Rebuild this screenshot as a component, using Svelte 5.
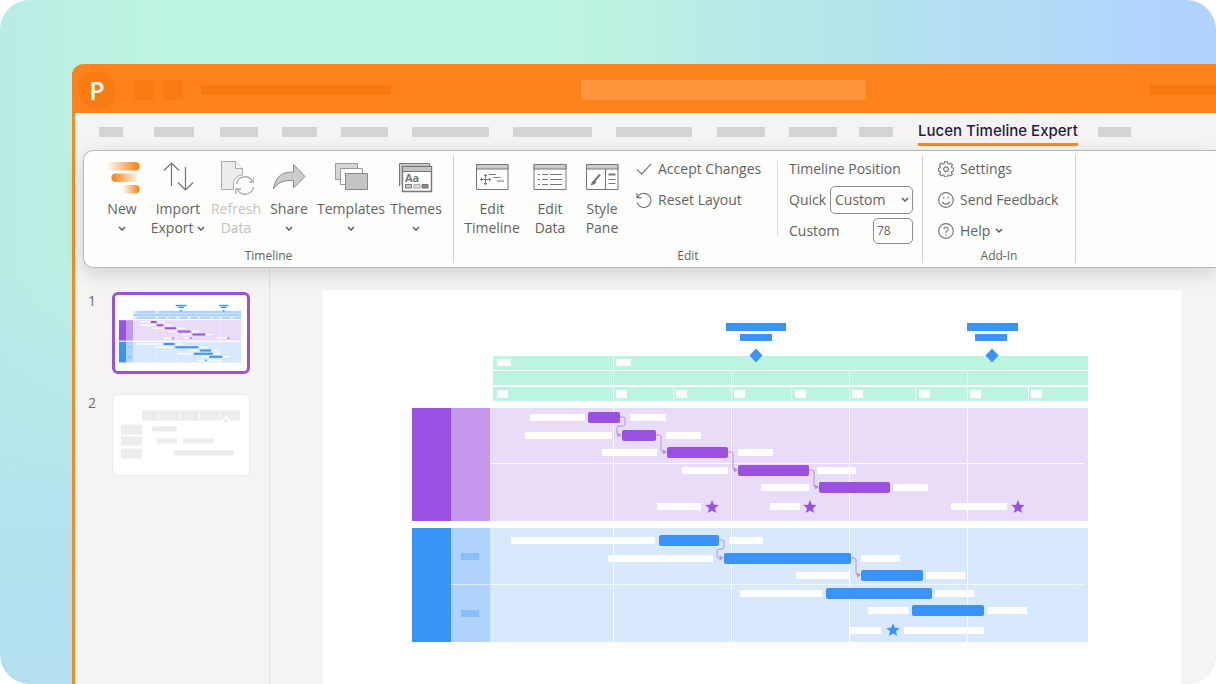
<script lang="ts">
	interface Task {
		y: number;
		before: number[];
		bar: number[];
		after: number[];
	}

	// placeholder tabs: bar width and the room each one takes
	const tabs = [
		{ bar: 24, slot: 55 },
		{ bar: 40, slot: 66 },
		{ bar: 38, slot: 62 },
		{ bar: 35, slot: 59 },
		{ bar: 47, slot: 71 },
		{ bar: 77, slot: 101 },
		{ bar: 79, slot: 103 },
		{ bar: 76, slot: 101 },
		{ bar: 48, slot: 72 },
		{ bar: 48, slot: 70 },
		{ bar: 34, slot: 59 }
	];

	const purpleTasks: Task[] = [
		{ y: 127, before: [207, 55], bar: [265, 32], after: [307, 36] },
		{ y: 145, before: [202, 87], bar: [299, 34], after: [343, 35] },
		{ y: 162, before: [279, 55], bar: [344, 61], after: [415, 35] },
		{ y: 180, before: [359, 46], bar: [415, 71], after: [494, 39] },
		{ y: 197, before: [438, 48], bar: [496, 71], after: [570, 35] }
	];

	const blueTasks: Task[] = [
		{ y: 250, before: [188, 144], bar: [336, 60], after: [406, 34] },
		{ y: 268, before: [285, 105], bar: [401, 127], after: [538, 39] },
		{ y: 285, before: [473, 54], bar: [538, 62], after: [603, 39] },
		{ y: 303, before: [417, 82], bar: [503, 106], after: [612, 39] },
		{ y: 320, before: [545, 41], bar: [589, 72], after: [665, 39] }
	];

	const purpleStars = [
		{ x: 389, y: 217, label: [334, 44] },
		{ x: 487, y: 217, label: [447, 30] },
		{ x: 695, y: 217, label: [628, 56] }
	];

	const milestones = [
		{ x: 433, top: [403, 60], sub: [417, 32] },
		{ x: 669, top: [644, 51], sub: [652, 32] }
	];

	const quarters = [290, 408, 526, 644];
	const months = [350, 468, 592, 705];
	const monthLabels = [174, 293, 353, 411, 472, 529, 596, 647, 708];

	let position = $state('Custom');
	let offset = $state('78');
	let current = $state(1);
</script>

{#snippet chevron()}
	<svg class="chevron" width="8" height="6" viewBox="0 0 8 6"><path d="M1 1l3 3 3-3" /></svg>
{/snippet}

{#snippet star(x: number, y: number, color: string)}
	<path
		d="M0-7L1.9-2.3 6.7-2 3 1.2 4.2 6 0 3.4-4.2 6-3 1.2-6.7-2-1.9-2.3Z"
		transform="translate({x} {y})"
		fill={color}
	/>
{/snippet}

{#snippet taskRows(tasks: Task[], color: string)}
	{#each tasks as task}
		<rect x={task.before[0]} y={task.y - 3} width={task.before[1]} height="7" fill="#fff" />
		<rect x={task.after[0]} y={task.y - 3} width={task.after[1]} height="7" fill="#fff" />
		<rect x={task.bar[0]} y={task.y - 5} width={task.bar[1]} height="11" rx="2" fill={color} />
	{/each}
{/snippet}

{#snippet chart(scale: string)}
	<!-- milestones sit above the time scale -->
	<g fill={scale}>
		<rect x="170" y="66" width="595" height="14" />
		<rect x="170" y="81" width="595" height="14" />
		<rect x="170" y="97" width="595" height="14" />
	</g>
	<g fill="#fff">
		<rect x="290" y="66" width="1" height="14" />
		<rect x="174" y="69" width="14" height="7" />
		<rect x="293" y="69" width="15" height="7" />
		{#each monthLabels as x}
			<rect {x} y="100" width="11" height="8" />
		{/each}
		{#each quarters as x}
			<rect {x} y="81" width="1" height="30" />
		{/each}
		{#each months as x}
			<rect {x} y="97" width="1" height="14" />
		{/each}
	</g>
	{#each milestones as m}
		<g fill="#3a93f8">
			<rect x={m.top[0]} y="33" width={m.top[1]} height="8" />
			<rect x={m.sub[0]} y="44" width={m.sub[1]} height="7" />
			<path d="M{m.x} 58.500l6.500 7-6.500 7-6.500-7z" />
		</g>
	{/each}

	<rect x="89" y="118" width="39" height="113" fill="#9a51e2" />
	<rect x="128" y="118" width="39" height="113" fill="#c297ec" />
	<rect x="167" y="118" width="598" height="113" fill="#e9dcf9" />
	<rect x="89" y="238" width="39" height="114" fill="#3a93f8" />
	<rect x="128" y="238" width="39" height="114" fill="#b0d3fd" />
	<rect x="167" y="238" width="598" height="114" fill="#d8e9fe" />
	<rect x="138" y="263" width="18" height="7" fill="#8bbdfa" />
	<rect x="138" y="320" width="18" height="7" fill="#8bbdfa" />
	<g fill="#fff">
		{#each quarters as x}
			<rect {x} y="118" width="1" height="113" />
			<rect {x} y="238" width="1" height="114" />
		{/each}
		<rect x="167" y="173" width="594" height="1" />
		<rect x="128" y="294" width="633" height="1" opacity="0.6" />
	</g>

	{@render taskRows(purpleTasks, '#9a51e2')}
	{@render taskRows(blueTasks, '#3a93f8')}
	<g fill="none" stroke="#b98ee6" stroke-width="1">
		<path d="M297 127h3q2 0 2 2v5q0 2-2 2h-4q-2 0-2 2v5q0 2 2 2" />
		<path d="M333 145h3q2 0 2 2v13q0 2 2 2" />
		<path d="M405 162h3q2 0 2 2v14q0 2 2 2" />
		<path d="M486 180h3q2 0 2 2v13q0 2 2 2" />
		<path d="M396 250h3q2 0 2 2v5q0 2-2 2h-3q-2 0-2 2v5q0 2 2 2" />
		<path d="M528 268h3q2 0 2 2v13q0 2 2 2" />
	</g>
	<g fill="#b98ee6">
		<path d="M294.500 142.500l4 2.500-4 2.500zM340 159.500l4 2.500-4 2.500zM411 177.500l4 2.500-4 2.500z" />
		<path d="M492 194.500l4 2.500-4 2.500zM396.500 265.500l4 2.500-4 2.500zM534 282.500l4 2.500-4 2.500z" />
	</g>

	{#each purpleStars as s}
		<rect x={s.label[0]} y={s.y - 4} width={s.label[1]} height="7" fill="#fff" />
		{@render star(s.x, s.y, '#9a51e2')}
	{/each}
	<rect x="527" y="337" width="31" height="7" fill="#fff" />
	<rect x="581" y="337" width="80" height="7" fill="#fff" />
	{@render star(570, 340, '#3a93f8')}
{/snippet}

<main>
	<div class="window">
		<header class="title-bar">
			<span class="logo">P</span>
			<span class="square"></span>
			<span class="square"></span>
			<span class="doc-name"></span>
			<input class="search" type="text" aria-label="Search" />
			<span class="account"></span>
		</header>

		<nav class="tabs">
			{#each tabs as tab}
				<span class="slot" style="width: {tab.slot}px">
					<span class="bar" style="width: {tab.bar}px"></span>
				</span>
			{/each}
			<a class="active-tab" href="#timeline">Lucen Timeline Expert</a>
			<span class="bar last"></span>
		</nav>

		<section class="ribbon">
			<div class="group timeline">
				<div class="tools">
					<button class="tool">
						<svg width="36" height="36" viewBox="0 0 36 36">
							<defs>
								<linearGradient id="fadeLeft">
									<stop offset="0" stop-color="#fb8f2a" stop-opacity="0.05" />
									<stop offset="0.9" stop-color="#f58a22" />
								</linearGradient>
								<linearGradient id="fadeRight">
									<stop offset="0.1" stop-color="#f58a22" />
									<stop offset="1" stop-color="#fb8f2a" stop-opacity="0.1" />
								</linearGradient>
							</defs>
							<path d="M4 2h27.500a4.300 4.300 0 0 1 0 8.600H4z" fill="url(#fadeLeft)" />
							<path d="M33 13.500H11.500a4.200 4.200 0 0 0 0 8.400H33z" fill="url(#fadeRight)" />
							<path d="M19 25h12.500a4.200 4.200 0 0 1 0 8.400H19z" fill="url(#fadeLeft)" />
						</svg>
						<span>New</span>
						<span>{@render chevron()}</span>
					</button>
					<button class="tool">
						<svg class="line" width="36" height="36" viewBox="0 0 36 36">
							<path d="M11.500 26V3M4 10.500L11.500 3l7.500 7.500M25.500 7v23M18 22.500l7.500 7.500 7.500-7.500" />
						</svg>
						<span>Import</span>
						<span>Export {@render chevron()}</span>
					</button>
					<button class="tool" disabled>
						<svg width="36" height="36" viewBox="0 0 36 36" fill="none" stroke="#aaa">
							<path d="M3.500 1.500h14l7 7V15a9 9 0 0 0-9 10v4.500h-12z" fill="#ececec" />
							<path d="M17.500 1.500v7h7" fill="#fff" />
							<path d="M18.500 24a8.500 8.500 0 0 1 16-2.500M36 17v5h-5M35.500 27a8.500 8.500 0 0 1-16 2.500M18 34v-5h5" stroke-width="1.300" />
						</svg>
						<span>Refresh</span>
						<span>Data</span>
					</button>
					<button class="tool">
						<svg width="36" height="36" viewBox="0 0 36 36">
							<path d="M2.500 28.500C5 16 11 12 22.500 12V4.500L34 16.500 22.500 28V20.500C13 20 7 22.500 2.500 28.500Z" fill="#ccc" stroke="#8b8b8b" />
						</svg>
						<span>Share</span>
						<span>{@render chevron()}</span>
					</button>
					<button class="tool">
						<svg width="36" height="36" viewBox="0 0 36 36" stroke="#9b9b9b">
							<path d="M2.500 3.500h22v16h-22z" fill="#d5d5d5" />
							<path d="M7.500 8.500h22v16h-22z" fill="#fdfdfd" />
							<path d="M12.500 13.500h22v16h-22z" fill="#c5c3c3" stroke="#898989" />
						</svg>
						<span>Templates</span>
						<span>{@render chevron()}</span>
					</button>
					<button class="tool">
						<svg width="36" height="36" viewBox="0 0 36 36" stroke="#777">
							<path d="M1.500 26V3.500h30V6" fill="#d0d0d0" />
							<path d="M4.500 6.500h29v25h-29z" fill="#fdfdfd" stroke-width="1.400" />
							<path d="M4.500 6.500h29v5h-29z" fill="#c5c5c5" />
							<text x="7" y="22" class="glyph">Aa</text>
							<path d="M7.500 24.500h6v3.500h-6z" fill="#ccc" />
							<path d="M16 24.500h6v3.500h-6z" fill="#ddd" stroke="#aaa" />
							<path d="M24 24.500h6v3.500h-6z" fill="#888" />
						</svg>
						<span>Themes</span>
						<span>{@render chevron()}</span>
					</button>
				</div>
				<h2>Timeline</h2>
			</div>

			<div class="group edit">
				<div class="tools">
					<button class="tool">
						<svg width="36" height="36" viewBox="0 0 36 36" fill="none" stroke="#777">
							<path d="M2.500 4.500h31.500v25h-31.500z" />
							<path d="M2.500 4.500h31.500v4.500h-31.500z" fill="#ccc" />
							<path d="M11.500 14.500v10M6.500 19.500h10M10 16l1.500-1.800 1.500 1.800M10 23l1.500 1.800 1.500-1.800M8 18l-1.800 1.500L8 21M15 18l1.800 1.500L15 21M15 14.500h7M19.500 17.500h7M23 21h7" />
						</svg>
						<span>Edit</span>
						<span>Timeline</span>
					</button>
					<button class="tool">
						<svg width="36" height="36" viewBox="0 0 36 36" fill="none" stroke="#777">
							<path d="M2 4.500h32v25H2z" />
							<path d="M2 4.500h32v4.500H2z" fill="#ccc" />
							<path d="M6 14.500h2M10 14.500h6M18 14.500h12M6 19.500h2M10 19.500h6M18 19.500h12M6 24.500h2M10 24.500h6M18 24.500h12" />
						</svg>
						<span>Edit</span>
						<span>Data</span>
					</button>
					<button class="tool">
						<svg width="36" height="36" viewBox="0 0 36 36" fill="none" stroke="#777">
							<path d="M2.500 4.500h31.500v25h-31.500z" />
							<path d="M2.500 4.500h31.500v4.500h-31.500zM21.500 9v20.500" fill="#ccc" />
							<path d="M16 14.500L10 21.500" stroke-width="2" />
							<path d="M10.500 20l2 2q-2 3.500-6 3 1-1 1.200-2.500t2.800-2.500z" fill="#777" stroke="none" />
							<path d="M24.500 14.500h7" stroke-width="2" />
							<path d="M24.500 19.500h7M24.500 23.500h7" />
						</svg>
						<span>Style</span>
						<span>Pane</span>
					</button>
				</div>
				<div class="list actions">
					<button>
						<svg class="line" width="16" height="16" viewBox="0 0 17 17"><path d="M1 9l5 5L16 3" /></svg>
						Accept Changes
					</button>
					<button>
						<svg class="line" width="16" height="16" viewBox="0 0 17 17">
							<path d="M1 1v5h5M1.500 6A7.500 7.500 0 1 1 1.200 11" />
						</svg>
						Reset Layout
					</button>
				</div>
				<div class="list position">
					<p>Timeline Position</p>
					<p>
						<label for="quick">Quick</label>
						<span class="select">
							<select id="quick" bind:value={position}>
								<option>Custom</option>
								<option>Top</option>
								<option>Bottom</option>
							</select>
							{@render chevron()}
						</span>
					</p>
					<p>
						<label for="offset">Custom</label>
						<input id="offset" type="text" bind:value={offset} />
					</p>
				</div>
				<h2>Edit</h2>
			</div>

			<div class="group add-in">
				<div class="list">
					<button>
						<svg class="line" width="16" height="16" viewBox="0 0 17 17">
							<path d="M7 .8h3l.5 2 1.300.6 1.900-1.100 1.700 1.700-1.100 1.900.6 1.300 1.900.5v2.700l-1.900.5-.6 1.300 1.100 1.900-1.700 1.700-1.900-1.100-1.300.6-.5 1.900H7l-.5-1.900-1.300-.6-1.900 1.100-1.700-1.700 1.100-1.900-.6-1.300-1.600-.5V7.700l1.600-.5.6-1.300L1.600 4l1.700-1.700 1.900 1.100L6.500 2.800z" />
							<circle cx="8.500" cy="8.800" r="2.500" />
						</svg>
						Settings
					</button>
					<button>
						<svg class="line" width="16" height="16" viewBox="0 0 17 17">
							<circle cx="8.500" cy="8.500" r="7.800" />
							<path d="M4.500 10.500a4.500 4.500 0 0 0 8 0" />
							<path d="M6 5.500v1.500M11 5.500v1.500" stroke-width="1.600" />
						</svg>
						Send Feedback
					</button>
					<button>
						<svg class="line" width="16" height="16" viewBox="0 0 17 17">
							<circle cx="8.500" cy="8.500" r="7.800" />
							<path d="M6.200 6.500a2.300 2.300 0 1 1 3.500 2c-.8.500-1.200 1-1.200 2M8.500 12v1.200" />
						</svg>
						Help {@render chevron()}
					</button>
				</div>
				<h2>Add-In</h2>
			</div>
		</section>

		<div class="workspace">
			<aside>
				<div class="slide-item">
					<span>1</span>
					<button
						class="thumb"
						class:selected={current === 1}
						aria-label="Slide 1"
						onclick={() => (current = 1)}
					>
						<svg viewBox="67 -20 731 418">{@render chart('#b0d3fd')}</svg>
					</button>
				</div>
				<div class="slide-item">
					<span>2</span>
					<button
						class="thumb"
						class:selected={current === 2}
						aria-label="Slide 2"
						onclick={() => (current = 2)}
					>
						<svg viewBox="0 0 132 75" fill="#ececeb">
							<path d="M27 13h98v10H27zM6 27h21v10H6zM6 39h21v9H6zM6 51h21v10H6z" />
							<rect x="37" y="29" width="25" height="5" rx="1" />
							<rect x="42" y="41" width="20" height="5" rx="1" />
							<rect x="68" y="41" width="31" height="5" rx="1" />
							<rect x="58" y="53" width="61" height="5" rx="1" />
							<path d="M43 15h1v6h-1zM64 15h1v6h-1zM84 15h1v6h-1zM105 15h1v6h-1z" fill="#fff" />
							<path d="M111 18l5 5-5 5-5-5z" fill="#fff" />
							<circle cx="111" cy="23" r="2" />
						</svg>
					</button>
				</div>
			</aside>
			<article class="slide">
				<svg viewBox="0 0 858 394">{@render chart('#bdf4df')}</svg>
			</article>
		</div>
	</div>
</main>

<style>
	:global(body) {
		background: #fff;
	}

	main {
		min-height: 100vh;
		box-sizing: border-box;
		display: flex;
		padding: 64px 0 0 72px;
		border-radius: 30px;
		overflow: hidden;
		background:
			linear-gradient(to top, #b3dff0 0%, #b4e4ef 25%, transparent 60%),
			linear-gradient(to right, #b9ece6 0%, #bdf4df 14%, #bdf4df 46%, #b4e2ee 74%, #b0d3fd 96%);
		font-family: "Open Sans", "Noto Sans", sans-serif;
		font-size: 14px;
		color: #636261;
	}

	button,
	input,
	select {
		font: inherit;
		color: inherit;
		border: 0;
		padding: 0;
		margin: 0;
		background: none;
	}

	button {
		cursor: pointer;
	}

	h2,
	p {
		margin: 0;
		font-weight: normal;
	}

	.window {
		flex: 1;
		min-width: 0;
		display: flex;
		flex-direction: column;
		border-left: 3px solid #f58a26;
		border-top-left-radius: 12px;
		background: #f5f4f3;
	}

	.title-bar {
		height: 49px;
		margin-left: -3px;
		display: flex;
		align-items: center;
		border-top-left-radius: 12px;
		background: #fd821b;

		& .logo {
			width: 38px;
			height: 38px;
			margin: 2px 18px 0 6px;
			border-radius: 50%;
			background: #f87c12;
			color: #fff;
			font-size: 25px;
			font-weight: 600;
			line-height: 38px;
			text-align: center;
		}

		& .square {
			width: 20px;
			height: 20px;
			margin: 2px 9px 0 0;
			background: #f97b12;
		}

		& .doc-name,
		& .account {
			width: 190px;
			height: 10px;
			margin: 2px 190px 0 9px;
			background: #f87810;
		}

		& .search {
			flex: 0 1 285px;
			min-width: 0;
			height: 20px;
			margin-top: 2px;
			background: #ff943c;
		}

		& .account {
			width: 66px;
			margin: 2px 0 0 auto;
		}
	}

	.tabs {
		height: 37px;
		padding-left: 24px;
		display: flex;
		align-items: center;

		& .slot {
			flex: none;
		}

		& .bar {
			display: block;
			height: 10px;
			background: #d6d4d3;
		}

		& .last {
			width: 33px;
			margin-left: 20px;
		}
	}

	.active-tab {
		margin-top: 2px;
		border-bottom: 3px solid #f58a1f;
		border-radius: 1px;
		color: #211b4b;
		font-family: Inter, sans-serif;
		font-size: 15px;
		font-weight: 500;
		line-height: 24px;
		text-decoration: none;
		white-space: nowrap;
	}

	.ribbon {
		height: 116px;
		margin-left: 8px;
		display: flex;
		border: 1px solid #b9b8b7;
		border-right: 0;
		border-radius: 10px 0 0 10px;
		background: #fdfdfc;
		box-shadow: 0 6px 20px rgba(0, 0, 0, 0.14);
		z-index: 1;
	}

	.group {
		margin: 4px 0;
		display: grid;
		grid-template-rows: 1fr 14px;
		border-right: 1px solid #d3d2d1;

		& h2 {
			grid-column: 1 / -1;
			font-size: 12px;
			line-height: 14px;
			text-align: center;
		}
	}

	.tools {
		display: grid;
	}

	.timeline .tools {
		grid-template-columns: 48px 64px 52px 54px 70px 60px;
		padding: 0 7px 0 14px;
	}

	.edit {
		grid-template-columns: auto auto auto;

		& .tools {
			grid-template-columns: 64px 52px 52px;
			padding: 0 8px 0 6px;
		}
	}

	.tool {
		display: flex;
		flex-direction: column;
		align-items: center;
		padding-top: 5px;
		line-height: 19px;
		white-space: nowrap;

		& > svg {
			margin-bottom: 3px;
		}

		&:disabled {
			color: #c3c2c1;
			cursor: default;
		}
	}

	.line {
		fill: none;
		stroke: #757473;
		stroke-width: 1.2;
	}

	.chevron {
		fill: none;
		stroke: #555;
		stroke-width: 1.4;
		vertical-align: 1px;
	}

	.glyph {
		fill: #777;
		stroke: none;
		font-size: 11px;
		font-weight: 700;
	}

	.list {
		display: grid;
		grid-template-rows: repeat(3, 29px);
		gap: 2px;
		margin-top: -1px;
		white-space: nowrap;

		& button {
			display: flex;
			align-items: center;
			gap: 6px;
		}
	}

	.actions {
		width: 141px;
	}

	.position {
		width: 125px;
		box-sizing: border-box;
		width: 145px;
		padding: 0 9px 0 12px;
		/* divider is shorter than the ones between groups */
		background: linear-gradient(#dad9d8, #dad9d8) 0 7px / 1px 75px no-repeat;

		& p {
			display: flex;
			align-items: center;
			justify-content: space-between;
		}

		& input {
			width: 40px;
			height: 26px;
			box-sizing: border-box;
			padding: 0 3px;
			border: 1px solid #8f8e8d;
			border-radius: 5px;
			font-size: 12px;
		}
	}

	.select {
		display: grid;
		align-items: center;

		& select {
			grid-area: 1 / 1;
			width: 83px;
			height: 28px;
			padding: 0 4px;
			appearance: none;
			border: 1px solid #8f8e8d;
			border-radius: 5px;
		}

		& .chevron {
			grid-area: 1 / 1;
			justify-self: end;
			margin-right: 4px;
			pointer-events: none;
		}
	}

	.add-in .list {
		width: 137px;
		padding-left: 15px;

		& .chevron {
			margin-left: -1px;
		}
	}

	.workspace {
		flex: 1;
		display: flex;
	}

	aside {
		width: 195px;
		padding: 24px 19px 0 13px;
		box-sizing: border-box;
		border-right: 1px solid #e1e0df;
	}

	.slide-item {
		display: flex;
		justify-content: space-between;
		margin-bottom: 20px;
		line-height: 18px;
		color: #6d6c6b;
	}

	.thumb {
		width: 138px;
		height: 82px;
		box-sizing: border-box;
		border: 1px solid #ecebea;
		border-radius: 6px;
		padding: 2px;
		background: #fff;

		&.selected {
			border: 3px solid #9a51e2;
			padding: 0;
		}

		& svg {
			display: block;
			width: 100%;
			height: 100%;
		}
	}

	.slide {
		flex: 1;
		min-width: 0;
		margin: 22px 35px 0 53px;
		background: #fff;

		& svg {
			display: block;
			width: 100%;
		}
	}
</style>
